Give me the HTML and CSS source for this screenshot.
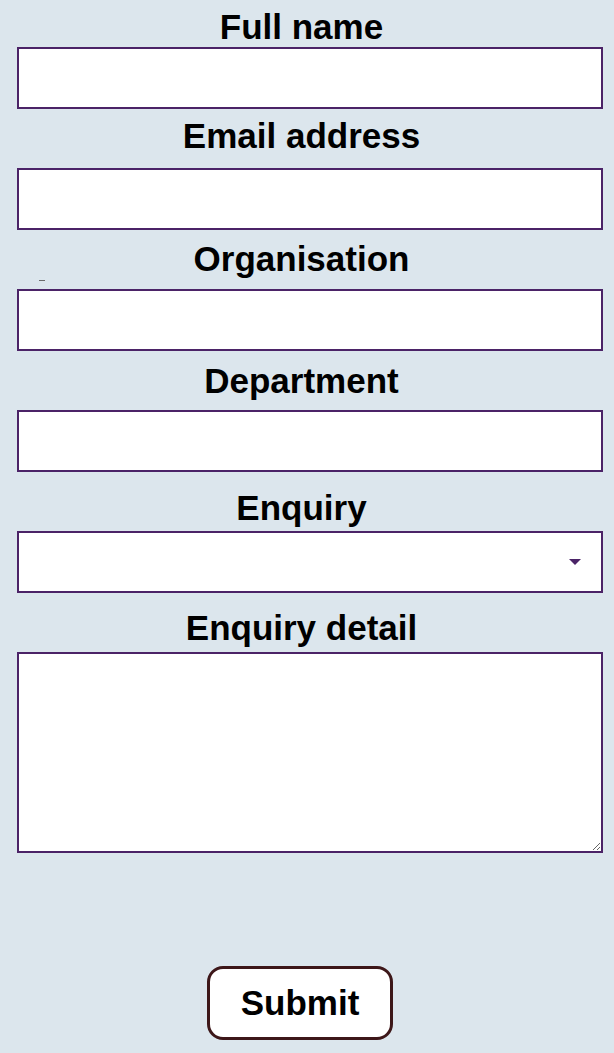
FILE: index.html
```html
<!DOCTYPE html>
<html lang="en">
<head>
<meta charset="utf-8">
<title>Enquiry form</title>
<link rel="stylesheet" href="styles.css">
</head>
<body>
<form class="form">
  <div class="field field-first">
    <label class="label" for="name">Full name</label>
    <input class="input" id="name" type="text">
  </div>
  <div class="field">
    <label class="label" for="email">Email address</label>
    <input class="input" id="email" type="email">
  </div>
  <div class="field">
    <span class="mark"></span>
    <label class="label label-down2" for="org">Organisation</label>
    <input class="input" id="org" type="text">
  </div>
  <div class="field">
    <label class="label label-down3" for="dept">Department</label>
    <input class="input" id="dept" type="text">
  </div>
  <div class="field">
    <label class="label label-down9" for="enq">Enquiry</label>
    <div class="select-wrap">
      <select class="input select" id="enq">
        <option></option>
      </select>
    </div>
  </div>
  <div class="field">
    <label class="label label-down8" for="detail">Enquiry detail</label>
    <textarea class="input textarea" id="detail"></textarea>
  </div>
  <div class="actions">
    <button class="submit" type="button">Submit</button>
  </div>
</form>
</body>
</html>
```

FILE: styles.css
```css
html, body {
  margin: 0;
  padding: 0;
}

body {
  background: #dce6ed;
  font-family: "Liberation Sans", Arial, Helvetica, sans-serif;
  color: #000;
}

.form {
  width: 603px;
  position: relative;
}

.field {
  display: block;
  position: relative;
}

.label {
  display: block;
  text-align: center;
  font-weight: bold;
  font-size: 35px;
  line-height: 40px;
  margin: 7px 0 12px;
}

.field-first .label {
  margin-bottom: 0;
}

.label-down2 {
  margin-top: 9px;
  margin-bottom: 10px;
}

.label-down3 {
  margin-top: 10px;
  margin-bottom: 9px;
}

.label-down8 {
  margin-top: 15px;
  margin-bottom: 4px;
}

.label-down9 {
  margin-top: 16px;
  margin-bottom: 3px;
}

.input {
  display: block;
  box-sizing: border-box;
  margin: 0 0 0 17px;
  width: 586px;
  height: 62px;
  border: 2px solid #4b2367;
  border-radius: 0;
  background: #fff;
  padding: 0 8px;
  font-family: inherit;
  font-size: 18px;
  outline: none;
}

.select-wrap {
  position: relative;
}

.select {
  -webkit-appearance: none;
  appearance: none;
}

.select-wrap::after {
  content: "";
  position: absolute;
  right: 22px;
  top: 28px;
  width: 0;
  height: 0;
  border-left: 6px solid transparent;
  border-right: 6px solid transparent;
  border-top: 6px solid #4b2367;
  pointer-events: none;
}

.textarea {
  height: 201px;
  resize: both;
}

.mark {
  position: absolute;
  left: 39px;
  top: 41px;
  width: 6px;
  height: 1px;
  background: #6a6a6a;
}

.actions {
  display: flex;
  justify-content: center;
  margin-top: 113px;
}

.submit {
  box-sizing: border-box;
  width: 186px;
  height: 74px;
  margin-right: 3px;
  background: #fff;
  border: 3px solid #3d1719;
  border-radius: 16px;
  font-family: inherit;
  font-weight: bold;
  font-size: 35px;
  color: #000;
  padding: 0;
}
```
